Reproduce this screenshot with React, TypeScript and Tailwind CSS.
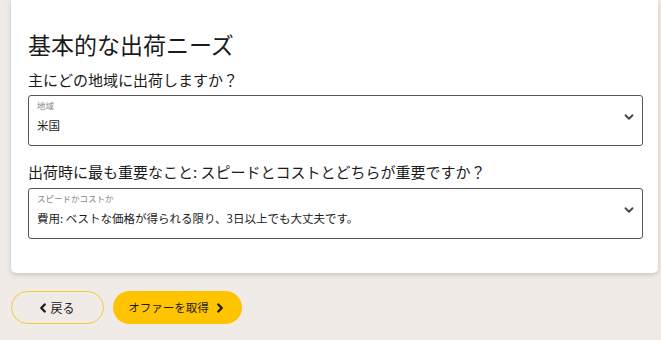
import { ChevronDown, ChevronLeft, ChevronRight } from "lucide-react"

const font = {
  fontFamily: '"Noto Sans CJK JP", "Noto Sans", sans-serif',
}

function SelectBox({ label, value }: { label: string; value: string }) {
  return (
    <div className="relative h-[51px] rounded-[3px] border border-[#5a5552] bg-white pl-[8px] pr-[36px]">
      <div className="mt-[3px] h-[12px] text-[8.5px] leading-[12px] text-[#8a8683]">{label}</div>
      <div className="mt-[5px] h-[18px] text-[11.5px] leading-[18px] text-[#1b1b1b]">{value}</div>
      <ChevronDown
        className="absolute right-[6px] top-[14px] h-[14px] w-[14px] text-[#4a4644]"
        strokeWidth={3.2}
      />
    </div>
  )
}

export default function App() {
  return (
    <div className="h-[340px] w-[661px] overflow-hidden bg-[#f0ebe7]" style={font}>
      <div className="ml-[11px] mr-[3px] rounded-b-[5px] bg-white pb-[34px] pl-[17px] pr-[15px] pt-[28px] shadow-[0_2px_5px_rgba(0,0,0,0.16)]">
        <h1 className="h-[33px] text-[23px] font-normal leading-[33px] text-[#1b1b1b]">
          基本的な出荷ニーズ
        </h1>
        <p className="mt-[8px] h-[22px] text-[15px] leading-[22px] text-[#1b1b1b]">
          主にどの地域に出荷しますか？
        </p>
        <div className="mt-[4px]">
          <SelectBox label="地域" value="米国" />
        </div>
        <p className="mt-[15px] h-[22px] text-[15px] leading-[22px] text-[#1b1b1b]">
          出荷時に最も重要なこと: スピードとコストとどちらが重要ですか？
        </p>
        <div className="mt-[5px]">
          <SelectBox
            label="スピードかコストか"
            value="費用: ベストな価格が得られる限り、3日以上でも大丈夫です。"
          />
        </div>
      </div>
      <div className="ml-[11px] mt-[18px] flex gap-[9px]">
        <button className="flex h-[33px] w-[93px] items-center justify-center rounded-full border border-[#f7c636] bg-transparent text-[12px] text-[#1b1b1b]">
          <ChevronLeft className="-ml-[4px] h-[14px] w-[14px]" strokeWidth={4} />
          <span>戻る</span>
        </button>
        <button className="flex h-[33px] w-[129px] items-center justify-center gap-[4px] rounded-full bg-[#ffc400] text-[11.5px] text-[#1b1b1b]">
          <span>オファーを取得</span>
          <ChevronRight className="h-[14px] w-[14px]" strokeWidth={4} />
        </button>
      </div>
    </div>
  )
}
